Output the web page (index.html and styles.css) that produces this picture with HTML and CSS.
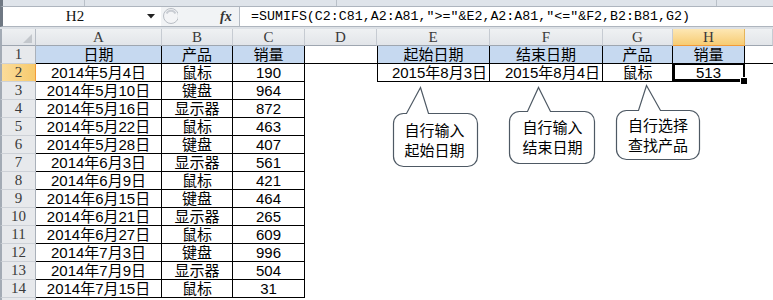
FILE: index.html
```html
<!DOCTYPE html>
<html lang="zh-CN">
<head>
<meta charset="utf-8">
<title>SUMIFS 多条件求和</title>
<link rel="stylesheet" href="styles.css">
</head>
<body>
<div class="app">
  <div class="ribbon"><span class="seg s1"></span><span class="seg s2"></span><span class="seg s3"></span><span class="seg s4"></span></div>
  <div class="fbar">
    <div class="namebox">
      <span class="nb-text">H2</span>
      <span class="nb-arrow"><svg width="8" height="5" viewBox="0 0 8 5"><path d="M0 0H8L4 4.5Z" fill="#222"/></svg></span>
    </div>
    <div class="fmid">
      <svg class="grip" width="16" height="19" viewBox="0 0 16 19"><circle cx="9" cy="9" r="7.5" fill="#f3f4f6" stroke="#b9bec5"/><path d="M4.5 6.5A5 5 0 0 1 13.5 6.5" fill="none" stroke="#c9cdd3" stroke-width="2"/></svg>
      <span class="fx">fx</span>
    </div>
    <div class="finput">=SUMIFS(C2:C81,A2:A81,"&gt;="&amp;E2,A2:A81,"&lt;="&amp;F2,B2:B81,G2)</div>
  </div>
  <div class="gap"></div>
  <div class="sheet">
    <div class="corner"><svg width="9" height="9" viewBox="0 0 9 9"><path d="M9 0V9H0Z" fill="#c3c7cc"/></svg></div>
    <div class="ch">A</div><div class="ch">B</div><div class="ch">C</div><div class="ch">D</div><div class="ch">E</div><div class="ch">F</div><div class="ch">G</div><div class="ch hi">H</div><div class="ch"></div>

    <div class="rh">1</div><div class="c t hd">日期</div><div class="c t hd">产品</div><div class="c t hd">销量</div><div class="c fz"></div><div class="c t tl hd">起始日期</div><div class="c t hd">结束日期</div><div class="c t hd">产品</div><div class="c t hd">销量</div><div class="c fz"></div>

    <div class="rh hi">2</div><div class="c t">2014年5月4日</div><div class="c t">鼠标</div><div class="c t">190</div><div class="c"></div><div class="c t tl r">2015年8月3日</div><div class="c t r">2015年8月4日</div><div class="c t">鼠标</div><div class="c t sel">513</div><div class="c"></div>

    <div class="rh">3</div><div class="c t">2014年5月10日</div><div class="c t">键盘</div><div class="c t">964</div><div class="rest"></div>
    <div class="rh">4</div><div class="c t">2014年5月16日</div><div class="c t">显示器</div><div class="c t">872</div><div class="rest"></div>
    <div class="rh">5</div><div class="c t">2014年5月22日</div><div class="c t">鼠标</div><div class="c t">463</div><div class="rest"></div>
    <div class="rh">6</div><div class="c t">2014年5月28日</div><div class="c t">键盘</div><div class="c t">407</div><div class="rest"></div>
    <div class="rh">7</div><div class="c t">2014年6月3日</div><div class="c t">显示器</div><div class="c t">561</div><div class="rest"></div>
    <div class="rh">8</div><div class="c t">2014年6月9日</div><div class="c t">鼠标</div><div class="c t">421</div><div class="rest"></div>
    <div class="rh">9</div><div class="c t">2014年6月15日</div><div class="c t">键盘</div><div class="c t">464</div><div class="rest"></div>
    <div class="rh">10</div><div class="c t">2014年6月21日</div><div class="c t">显示器</div><div class="c t">265</div><div class="rest"></div>
    <div class="rh">11</div><div class="c t">2014年6月27日</div><div class="c t">鼠标</div><div class="c t">609</div><div class="rest"></div>
    <div class="rh">12</div><div class="c t">2014年7月3日</div><div class="c t">键盘</div><div class="c t">996</div><div class="rest"></div>
    <div class="rh">13</div><div class="c t">2014年7月9日</div><div class="c t">显示器</div><div class="c t">504</div><div class="rest"></div>
    <div class="rh">14</div><div class="c t">2014年7月15日</div><div class="c t">鼠标</div><div class="c t">31</div><div class="rest"></div>
    <div class="rh"></div><div class="rest wide"></div>
  </div>

  <div class="callout co1">
    <svg class="bubble" width="88" height="82" viewBox="0 0 88 82"><path d="M11.5 27.5H14.5L28.5 1.5L36.5 27.5H75.5A10 10 0 0 1 85.5 37.5V70.5A10 10 0 0 1 75.5 80.5H11.5A10 10 0 0 1 1.5 70.5V37.5A10 10 0 0 1 11.5 27.5Z" fill="#fff" stroke="#4e5964" stroke-width="1.2"/></svg>
    <div class="ctext">自行输入<br>起始日期</div>
  </div>
  <div class="callout co2">
    <svg class="bubble" width="88" height="78" viewBox="0 0 88 78"><path d="M11.5 25.5H19.5L30.5 1.5L42.5 25.5H76.5A10 10 0 0 1 86.5 35.5V67.5A10 10 0 0 1 76.5 77.5H11.5A10 10 0 0 1 1.5 67.5V35.5A10 10 0 0 1 11.5 25.5Z" fill="#fff" stroke="#4e5964" stroke-width="1.2"/></svg>
    <div class="ctext">自行输入<br>结束日期</div>
  </div>
  <div class="callout co3">
    <svg class="bubble" width="86" height="77" viewBox="0 0 86 77"><path d="M11.5 26.5H23.5L31.5 1.5L45.5 26.5H74.5A10 10 0 0 1 84.5 36.5V65.5A10 10 0 0 1 74.5 75.5H11.5A10 10 0 0 1 1.5 65.5V36.5A10 10 0 0 1 11.5 26.5Z" fill="#fff" stroke="#4e5964" stroke-width="1.2"/></svg>
    <div class="ctext">自行选择<br>查找产品</div>
  </div>
</div>
</body>
</html>
```

FILE: styles.css
```css
* { box-sizing: border-box; margin: 0; padding: 0; }
html, body { width: 773px; height: 300px; overflow: hidden; background: #fff; }
body {
  font-family: "Liberation Sans", "Noto Sans CJK SC", sans-serif;
  font-size: 15px;
  color: #000;
}
.app { position: relative; width: 773px; height: 300px; overflow: hidden; }

/* ribbon remnant */
.ribbon {
  display: flex;
  height: 7px;
  background: #dfe4ea;
  border-bottom: 1px solid #aeb5be;
  border-left: 3px solid #6f7883;
}
.seg { display: block; height: 100%; border-right: 1px solid #b9c0c8; }
.s1 { width: 82px; }
.s2 { width: 252px; }
.s3 { width: 380px; }
.s4 { flex: 1; border-right: none; }

/* formula bar */
.fbar {
  display: flex;
  height: 20px;
  background: #fff;
  border-left: 3px solid #6f7883;
  border-bottom: 1px solid #aeb5be;
}
.namebox {
  display: flex;
  width: 158px;
  align-items: center;
  background: #fff;
  font-family: "Liberation Serif", serif;
  font-size: 15px;
  color: #111;
}
.nb-text { flex: 1; text-align: center; padding-left: 2px; }
.nb-arrow { width: 16px; display: flex; align-items: center; justify-content: center; padding-right: 4px; }
.fmid {
  display: flex;
  align-items: center;
  width: 79px;
  background: #f1f3f5;
  border-right: 1px solid #b4bbc4;
}
.grip { margin-left: 1px; }
.fx {
  margin-left: 42px;
  font-family: "Liberation Serif", serif;
  font-style: italic;
  font-weight: bold;
  font-size: 14px;
  color: #333;
}
.finput {
  flex: 1;
  display: flex;
  align-items: center;
  padding-left: 11px;
  font-family: "Liberation Mono", monospace;
  font-size: 13.3px;
  color: #000;
  white-space: nowrap;
}
.gap { height: 2px; background: #dde1e6; }

/* sheet grid */
.sheet {
  display: grid;
  grid-template-columns: 36px 126px 71px 72px 72px 113px 113px 70px 72px 1fr;
  grid-template-rows: 17px repeat(15, 18px);
}
.corner, .ch, .rh {
  font-family: "Liberation Serif", serif;
  font-size: 15px;
  color: #3a3a3a;
  display: flex;
  align-items: center;
  justify-content: center;
}
.corner {
  background: linear-gradient(#eef0f2, #e1e4e8);
  border-left: 2px solid #a3abb5;
  border-right: 1px solid #b7bdc5;
  border-bottom: 1px solid #9ea6b0;
  align-items: flex-end;
  justify-content: flex-end;
  padding: 0 3px 2px 0;
}
.ch {
  background: linear-gradient(#eff1f3, #e2e5e9);
  border-right: 1px solid #c6cbd2;
  border-bottom: 1px solid #9ea6b0;
  padding-top: 1px;
}
.ch.hi {
  background: linear-gradient(#fde7b4, #f7cc73);
  border-right-color: #e5b45a;
  border-bottom: 1px solid #f29b38;
}
.rh {
  background: #e7e9ec;
  border-left: 2px solid #a3abb5;
  border-right: 1px solid #aab1ba;
  border-bottom: 1px solid #cdd1d7;
}
.rh.hi {
  background: linear-gradient(90deg, #fbdc9a, #f7ca6c);
  border-right-color: #f29b38;
}

.c {
  display: flex;
  align-items: center;
  justify-content: center;
  white-space: nowrap;
  overflow: hidden;
  line-height: 1;
  background: #fff;
}
.t { border-right: 1px solid #000; border-bottom: 1px solid #000; }
.tl { border-left: 1px solid #000; }
.hd { background: #c6d9f0; }
.fz { border-bottom: 1px solid #000; }
.r { justify-content: flex-end; padding-right: 2px; }
.rest { grid-column: span 6; background: #fff; }
.rest.wide { grid-column: span 9; }

.sel { position: relative; z-index: 1; overflow: visible; }
.sel::after {
  content: "";
  position: absolute;
  left: 0;
  top: -1px;
  right: -1px;
  bottom: 0;
  border: 2px solid #000;
  box-shadow: inset 0 0 0 1px #fff;
}
.sel::before {
  content: "";
  position: absolute;
  right: -4px;
  bottom: -4px;
  width: 6px;
  height: 6px;
  background: #000;
  border: 1px solid #fff;
  z-index: 2;
}

/* callouts */
.callout { position: absolute; }
.bubble { position: absolute; left: 0; top: 0; }
.ctext {
  position: relative;
  font-family: "Noto Sans CJK SC", sans-serif;
  font-size: 15px;
  line-height: 20px;
  text-align: center;
  color: #000;
}
.co1 { left: 392px; top: 86px; width: 88px; height: 82px; }
.co1 .ctext { padding: 34px 4px 0 1px; }
.co2 { left: 508px; top: 86px; width: 88px; height: 78px; }
.co2 .ctext { padding: 31px 1px 0 2px; }
.co3 { left: 615px; top: 84px; width: 86px; height: 77px; }
.co3 .ctext { padding: 31px 1px 0 1px; }
```
